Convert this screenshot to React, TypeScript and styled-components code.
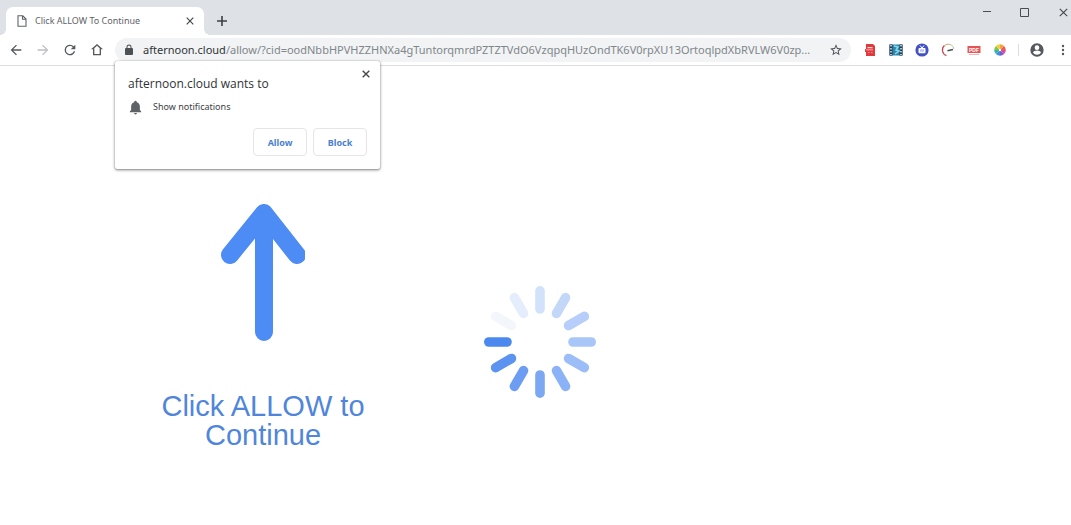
import React from "react";
import styled, { createGlobalStyle } from "styled-components";

const GlobalStyle = createGlobalStyle`
  * { box-sizing: border-box; }
  body {
    margin: 0;
    background: #fff;
    color: #3c4043;
    font-family: "Noto Sans", "Open Sans", sans-serif;
  }
  button { font: inherit; color: inherit; }
`;

const Browser = styled.div`
  display: flex;
  flex-direction: column;
  min-height: 100vh;
`;

const TabStrip = styled.header`
  display: flex;
  align-items: flex-end;
  height: 35px;
  padding-left: 6px;
  background: #dee1e6;
`;

const Tab = styled.div`
  position: relative;
  display: flex;
  align-items: center;
  width: 198px;
  height: 28px;
  padding: 0 7px 0 10px;
  border-radius: 7px 7px 0 0;
  background: #fff;
  &::before, &::after {
    content: "";
    position: absolute;
    bottom: 0;
    width: 6px;
    height: 6px;
  }
  &::before {
    left: -6px;
    background: radial-gradient(circle at 0 0, #dee1e6 6px, #fff 6px);
  }
  &::after {
    right: -6px;
    background: radial-gradient(circle at 100% 0, #dee1e6 6px, #fff 6px);
  }
`;

const TabTitle = styled.span`
  flex: 1;
  margin-left: 7px;
  font-size: 9px;
  line-height: 14px;
  color: #5f6368;
  white-space: nowrap;
`;

const IconButton = styled.button<{ $w?: number; $h?: number }>`
  display: flex;
  flex: none;
  align-items: center;
  justify-content: center;
  width: ${(p) => p.$w ?? 16}px;
  height: ${(p) => p.$h ?? 16}px;
  padding: 0;
  border: 0;
  background: none;
  color: #5f6368;
  svg { display: block; flex: none; }
`;

const NewTab = styled(IconButton)`
  margin: 0 0 6px 10px;
`;

const WindowControls = styled.div`
  display: flex;
  align-self: flex-start;
  gap: 22px;
  height: 24px;
  align-items: center;
  margin-left: auto;
`;

const Toolbar = styled.div`
  display: flex;
  align-items: center;
  height: 31px;
  padding-left: 8px;
  border-bottom: 1px solid #dcdee0;
  background: #fff;
`;

const Navigation = styled.nav`
  display: flex;
  gap: 11px;
  margin-right: 10px;
`;

const AddressBar = styled.div`
  position: relative;
  display: flex;
  flex: 1;
  align-items: center;
  min-width: 0;
  height: 24px;
  padding: 0 7px 0 8px;
  border-radius: 12px;
  background: #f1f3f4;
`;

const Address = styled.span`
  flex: 1;
  min-width: 0;
  margin: 0 8px;
  overflow: hidden;
  font-size: 11px;
  line-height: 18px;
  color: #80868b;
  text-overflow: ellipsis;
  white-space: nowrap;
  b { font-weight: 400; color: #303336; }
`;

const Extensions = styled.div`
  display: flex;
  gap: 10px;
  margin-left: 11px;
`;

const Divider = styled.div`
  width: 1px;
  height: 12px;
  margin: 0 10px;
  background: #dadce0;
`;

const MenuButton = styled(IconButton)`
  margin-left: 10px;
`;

const PermissionPrompt = styled.section`
  position: absolute;
  top: 23px;
  left: 0;
  z-index: 1;
  width: 265px;
  padding: 14px 13px 13px;
  border-radius: 2px;
  background: #fff;
  box-shadow: 0 1px 3px rgba(0, 0, 0, 0.5), 0 0 1px rgba(0, 0, 0, 0.35);
`;

const PromptClose = styled(IconButton)`
  position: absolute;
  top: 5px;
  right: 6px;
`;

const PromptTitle = styled.h2`
  margin: 0;
  font-family: "Open Sans", "Noto Sans", sans-serif;
  font-size: 12px;
  font-weight: 400;
  line-height: 18px;
  color: #303336;
`;

const Permission = styled.p`
  display: flex;
  align-items: center;
  gap: 10px;
  margin: 6px 0 13px;
  font-size: 9px;
  line-height: 16px;
`;

const PromptActions = styled.div`
  display: flex;
  justify-content: flex-end;
  gap: 6px;
`;

const PromptButton = styled.button`
  width: 54px;
  height: 28px;
  padding: 0;
  border: 1px solid #e3e5e8;
  border-radius: 4px;
  background: #fff;
  && {
    color: #4a7fd0;
    font-size: 9px;
    font-weight: 700;
  }
`;

const Page = styled.main`
  display: grid;
  grid-template-columns: 1fr 112px 1fr;
  align-items: start;
  padding: 135px 0 0 9px;
`;

const Guide = styled.div`
  display: flex;
  flex-direction: column;
  align-items: center;
  justify-self: end;
  width: 220px;
  margin-right: 111px;
`;

const GuideText = styled.h1`
  margin: 51px 0 0;
  color: #4f86dc;
  font-family: "Liberation Sans", Arial, sans-serif;
  font-size: 29px;
  font-weight: 400;
  line-height: 29px;
  text-align: center;
`;

const Loader = styled.div`
  margin-top: 85px;
  svg { display: block; }
`;

const CloseIcon = ({ size = 8, weight = 1.4 }: { size?: number; weight?: number }) => (
  <svg width={size} height={size} viewBox="0 0 8 8" fill="none" stroke="#45484c" strokeWidth={weight}>
    <path d="M.7.7l6.6 6.6M7.3.7L.7 7.3" />
  </svg>
);

const NavIcon = ({ d, color = "#55595d" }: { d: string; color?: string }) => (
  <svg width="16" height="16" viewBox="0 0 24 24" fill={color}>
    <path d={d} />
  </svg>
);

const extensions = [
  {
    name: "PDF converter",
    art: (
      <>
        <path d="M4 2h7l2 2v10H4V10H3V7h1z" fill="#e23a3c" />
        <path d="M5.500 5h5v1.200h-5zM4 7.500h7v.800H4z" fill="#f9d4d3" />
        <path d="M6 10.500h1.500M9 10.500h1.500" stroke="#f08f8d" />
      </>
    ),
  },
  {
    name: "Video downloader",
    art: (
      <>
        <path d="M1.500 2.500h13v11h-13z" fill="#2f86ac" />
        <path d="M3 2.500v11M13 2.500v11" stroke="#24364d" strokeWidth="3" />
        <path d="M3 3v10M13 3v10" stroke="#d7edf3" strokeWidth="1.500" strokeDasharray="1.500 1.500" />
        <path d="M6 4l4 1-2 3 3 1-4 3" stroke="#80dced" strokeWidth="1.500" fill="none" />
      </>
    ),
  },
  {
    name: "TV",
    art: (
      <>
        <circle cx="8" cy="8" r="6.600" fill="#4052c6" />
        <rect x="4.500" y="6" width="7" height="5.200" rx="1" fill="#fff" />
        <rect x="6" y="7.200" width="4" height="2.600" fill="#bfc6ef" />
        <path d="M6 3.500L8 6l2-2.500" stroke="#fff" fill="none" />
      </>
    ),
  },
  {
    name: "Speed test",
    art: (
      <g fill="none">
        <path d="M6.500 13.500A5.800 5.800 0 0 1 4.500 3.500" stroke="#bd4a55" strokeWidth="1.200" />
        <path d="M4.500 3.500A6 6 0 0 1 10 2.400" stroke="#d8a56e" />
        <path d="M10 2.400A6 6 0 0 1 14 7" stroke="#b7cf9d" />
        <path d="M7.500 8.800l5.500-1.300" stroke="#4a4d50" strokeWidth="1.500" />
      </g>
    ),
  },
  {
    name: "PDF viewer",
    art: (
      <>
        <path d="M1.500 4h13v7h-13z" fill="#e55355" />
        <path d="M3 12.500h10" stroke="#f3b6b4" />
        <text x="8" y="9.500" fill="#fff" fontFamily="Liberation Sans, sans-serif" fontSize="5" fontWeight="700" textAnchor="middle">PDF</text>
      </>
    ),
  },
  {
    name: "Color picker",
    art: (
      <>
        {["#f6a13a", "#ef5b4c", "#d44fa0", "#8456c8", "#3c8fe0", "#35b6a4", "#83c64b", "#efd13e"].map((color, i) => (
          <path key={color} d="M8 8L8 2.200A5.800 5.800 0 0 1 12.100 3.900Z" fill={color} transform={`rotate(${i * 45} 8 8)`} />
        ))}
        <circle cx="8" cy="8" r="1.200" fill="#fff" />
      </>
    ),
  },
];

const spokes = ["#d2e2fb", "#c3d7f9", "#b6cef9", "#a9c6f9", "#9bbdf8", "#8bb2f7", "#7ca7f3", "#6c9df3", "#5c93f1", "#4b89ef", "#f3f7fc", "#e4edfb"];

export default function App() {
  return (
    <>
      <GlobalStyle />
      <Browser>
        <TabStrip>
          <Tab>
            <svg width="12" height="12" viewBox="0 0 12 12" fill="none" stroke="#5f6368" strokeWidth="1.1">
              <path d="M2 .8h4.800L10 4v7.200H2zM6.500.8V4.300H10" />
            </svg>
            <TabTitle>Click ALLOW To Continue</TabTitle>
            <IconButton $w={14} aria-label="Close tab"><CloseIcon size={8} weight={1.2} /></IconButton>
          </Tab>
          <NewTab aria-label="New tab">
            <svg width="10" height="10" viewBox="0 0 10 10" stroke="#3c4043" strokeWidth="1.600"><path d="M5 0v10M0 5h10" /></svg>
          </NewTab>
          <WindowControls>
            <IconButton aria-label="Minimize">
              <svg width="10" height="10" stroke="#4a4c50"><path d="M1 4.500h8" /></svg>
            </IconButton>
            <IconButton aria-label="Maximize">
              <svg width="10" height="10" fill="none" stroke="#4a4c50"><path d="M.5 1.500h8v8h-8z" /></svg>
            </IconButton>
            <IconButton aria-label="Close window"><CloseIcon size={9} weight={1} /></IconButton>
          </WindowControls>
        </TabStrip>
        <Toolbar>
          <Navigation aria-label="Browser navigation">
            <IconButton aria-label="Back"><NavIcon d="M20 11H7.830l5.590-5.590L12 4l-8 8 8 8 1.410-1.410L7.830 13H20v-2z" /></IconButton>
            <IconButton aria-label="Forward"><NavIcon color="#bcbfc2" d="M12 4l-1.410 1.410L16.170 11H4v2h12.170l-5.580 5.590L12 20l8-8z" /></IconButton>
            <IconButton aria-label="Reload"><NavIcon d="M17.650 6.350A7.958 7.958 0 0 0 12 4a8 8 0 1 0 7.730 10h-2.080A6 6 0 1 1 12 6c1.660 0 3.140.690 4.220 1.780L13 11h7V4l-2.350 2.350z" /></IconButton>
            <IconButton aria-label="Home"><NavIcon d="M12 3L3 11h3v9h12v-9h3L12 3zm0 2.700l4 3.600V18H8V9.300l4-3.600z" /></IconButton>
          </Navigation>
          <AddressBar>
            <svg width="12" height="12" viewBox="0 0 24 24" fill="#4d5156">
              <path d="M18 8h-1V6A5 5 0 0 0 7 6v2H6a2 2 0 0 0-2 2v10c0 1.100.9 2 2 2h12a2 2 0 0 0 2-2V10a2 2 0 0 0-2-2zM9 8V6a3 3 0 0 1 6 0v2H9z" />
            </svg>
            <Address>
              <b>afternoon.cloud</b>/allow/?cid=oodNbbHPVHZZHNXa4gTuntorqmrdPZTZTVdO6VzqpqHUzOndTK6V0rpXU13OrtoqlpdXbRVLW6V0zp...
            </Address>
            <IconButton aria-label="Bookmark this page">
              <svg width="14" height="14" viewBox="0 0 24 24" fill="#4d5156">
                <path d="M22 9.240l-7.190-.620L12 2 9.190 8.630 2 9.240l5.460 4.730L5.820 21 12 17.270 18.180 21l-1.630-7.030L22 9.240zM12 15.400l-3.760 2.270 1-4.280-3.320-2.880 4.380-.380L12 6.100l1.710 4.040 4.380.380-3.320 2.880 1 4.280L12 15.400z" />
              </svg>
            </IconButton>
            <PermissionPrompt role="dialog" aria-labelledby="prompt-title">
              <PromptClose aria-label="Close prompt"><CloseIcon weight={1.4} /></PromptClose>
              <PromptTitle id="prompt-title">afternoon.cloud wants to</PromptTitle>
              <Permission>
                <svg width="15" height="15" viewBox="0 0 24 24" fill="#5f6368">
                  <path d="M12 23a2.300 2.300 0 0 0 2.300-2.300H9.700A2.300 2.300 0 0 0 12 23zm7-7v-5.500c0-3.300-1.900-6-5-6.800V3a2 2 0 0 0-4 0v.700c-3.100.8-5 3.500-5 6.800V16l-2 2v1.500h18V18z" />
                </svg>
                Show notifications
              </Permission>
              <PromptActions>
                <PromptButton>Allow</PromptButton>
                <PromptButton>Block</PromptButton>
              </PromptActions>
            </PermissionPrompt>
          </AddressBar>
          <Extensions>
            {extensions.map(({ name, art }) => (
              <IconButton key={name} aria-label={name}>
                <svg width="16" height="16" viewBox="0 0 16 16">{art}</svg>
              </IconButton>
            ))}
          </Extensions>
          <Divider />
          <IconButton aria-label="Profile">
            <svg width="16" height="16" viewBox="0 0 24 24" fill="#55585c">
              <path d="M12 2a10 10 0 1 0 0 20 10 10 0 0 0 0-20zm0 3a3.500 3.500 0 1 1 0 7 3.500 3.500 0 0 1 0-7zm0 14.200a7.200 7.200 0 0 1-6-3.200c0-2 4-3.100 6-3.100s6 1.100 6 3.100a7.200 7.200 0 0 1-6 3.200z" />
            </svg>
          </IconButton>
          <MenuButton aria-label="Menu">
            <svg width="4" height="12" fill="#55585c"><circle cx="2" cy="2" r="1.200" /><circle cx="2" cy="6" r="1.200" /><circle cx="2" cy="10" r="1.200" /></svg>
          </MenuButton>
        </Toolbar>
        <Page>
          <Guide>
            <svg width="84" height="140" viewBox="0 0 84 140" fill="none" stroke="#4d8bf5" strokeWidth="18" strokeLinecap="round" strokeLinejoin="round">
              <path d="M43 12v119M9 54l34-42 33 42" />
            </svg>
            <GuideText>Click ALLOW to Continue</GuideText>
          </Guide>
          <Loader role="status" aria-label="Loading">
            <svg width="112" height="112" viewBox="-56 -56 112 112" strokeWidth="9.600" strokeLinecap="round">
              {spokes.map((color, i) => (
                <path key={color} d="M0-51.200V-33" stroke={color} transform={`rotate(${i * 30})`} />
              ))}
            </svg>
          </Loader>
        </Page>
      </Browser>
    </>
  );
}
